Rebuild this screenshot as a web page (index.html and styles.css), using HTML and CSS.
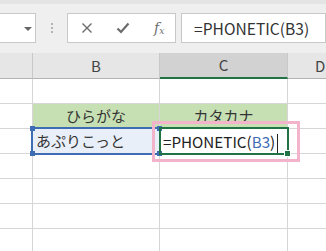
FILE: index.html
```html
<!DOCTYPE html>
<html lang="ja">
<head>
<meta charset="utf-8">
<link rel="stylesheet" href="styles.css">
</head>
<body>
<div class="app">
  <div class="toolbar">
    <div class="namebox">
      <span class="dropdown"></span>
    </div>
    <div class="grip"><span></span><span></span><span></span></div>
    <div class="fxbox">
      <svg class="icon" width="12" height="12" viewBox="0 0 12 12"><path d="M1.5 1.5 L10.5 10.5 M10.5 1.5 L1.5 10.5" stroke="#6b6b6b" stroke-width="1.4" fill="none"/></svg>
      <svg class="icon" width="14" height="12" viewBox="0 0 14 12"><path d="M1.5 6.5 L5 10 L12.5 1.5" stroke="#6b6b6b" stroke-width="2.2" fill="none"/></svg>
      <span class="fx">f<sub>x</sub></span>
    </div>
    <div class="formula">=PHONETIC(B3)</div>
  </div>
  <div class="sheet">
    <div class="hdr"></div>
    <div class="hdr">B</div>
    <div class="hdr hdr-active">C</div>
    <div class="hdr">D</div>

    <div class="cell"></div><div class="cell"></div><div class="cell"></div><div class="cell"></div>

    <div class="cell"></div>
    <div class="cell green">ひらがな</div>
    <div class="cell green">カタカナ</div>
    <div class="cell"></div>

    <div class="cell"></div>
    <div class="cell ref">あぷりこっと
      <span class="refbox"><i class="h tl"></i><i class="h bl"></i><i class="h tr"></i><i class="h br"></i></span>
    </div>
    <div class="cell edit">=PHONETIC(<span class="blue">B3</span>)<span class="caret"></span>
      <span class="activebox"><i class="fill"></i></span>
    </div>
    <div class="cell"></div>

    <div class="cell"></div><div class="cell"></div><div class="cell"></div><div class="cell"></div>
    <div class="cell"></div><div class="cell"></div><div class="cell"></div><div class="cell"></div>
    <div class="cell"></div><div class="cell"></div><div class="cell"></div><div class="cell"></div>
    <div class="cell"></div><div class="cell"></div><div class="cell"></div><div class="cell"></div>

    <div class="pink"></div>
  </div>
</div>
</body>
</html>
```
FILE: styles.css
```css
html, body {
  margin: 0;
  padding: 0;
  background: #ffffff;
}
.app {
  width: 326px;
  height: 251px;
  overflow: hidden;
  font-family: "Noto Sans CJK JP", "Noto Sans", sans-serif;
  color: #222;
}
.toolbar {
  height: 53px;
  box-sizing: border-box;
  background: #efefef;
  border-top: 4px solid #e4e4e4;
  padding-top: 9px;
  display: flex;
  align-items: flex-start;
}
.namebox {
  width: 37px;
  height: 30px;
  box-sizing: border-box;
  margin-left: -1px;
  background: #fff;
  border: 1px solid #c8c8c8;
  position: relative;
}
.dropdown {
  position: absolute;
  left: 24px;
  top: 13px;
  width: 0;
  height: 0;
  border-left: 4px solid transparent;
  border-right: 4px solid transparent;
  border-top: 4px solid #666;
}
.grip {
  width: 31px;
  height: 30px;
  display: flex;
  flex-direction: column;
  align-items: center;
  justify-content: center;
  gap: 2px;
}
.grip span {
  width: 2px;
  height: 2px;
  background: #b4b4b4;
}
.fxbox {
  width: 109px;
  height: 30px;
  box-sizing: border-box;
  background: #fff;
  border: 1px solid #c8c8c8;
  display: flex;
  align-items: center;
  padding-left: 13px;
  gap: 23px;
}
.fx {
  font-family: "DejaVu Serif", "Liberation Serif", serif;
  font-style: italic;
  font-size: 14px;
  color: #707070;
  margin-left: 1px;
}
.fx sub {
  font-size: 9px;
  vertical-align: -1px;
}
.formula {
  margin-left: 5px;
  flex: 1;
  height: 30px;
  box-sizing: border-box;
  background: #fff;
  border: 1px solid #c8c8c8;
  padding-left: 12px;
  font-size: 15.6px;
  line-height: 28px;
  color: #333;
  white-space: nowrap;
}
.sheet {
  position: relative;
  display: grid;
  grid-template-columns: 33px 127px 128px 1fr;
  grid-auto-rows: 25px;
  grid-template-rows: 26px;
}
.hdr {
  background: #e6e6e6;
  border-right: 1px solid #c8c8c8;
  border-bottom: 1px solid #b4b4b4;
  font-size: 15px;
  color: #444;
  text-align: center;
  line-height: 25px;
  overflow: hidden;
}
.hdr:nth-child(4) {
  border-right: none;
  text-align: left;
  padding-left: 27px;
}
.hdr-active {
  background: #d2d2d2;
  border-bottom: 2px solid #217346;
  line-height: 24px;
}
.cell {
  border-right: 1px solid #d6d6d6;
  border-bottom: 1px solid #d6d6d6;
  font-size: 15px;
  line-height: 24px;
  white-space: nowrap;
  position: relative;
}
.cell:nth-child(4n) { border-right: none; }
.green {
  background: #c6e0b4;
  text-align: center;
  color: #333;
}
.ref {
  background: #e9eff8;
  padding-left: 3px;
  color: #333;
}
.refbox {
  position: absolute;
  left: -2px;
  top: -2px;
  right: -2px;
  bottom: -2px;
  border: 2px solid #3f6db3;
  z-index: 2;
}
.h {
  position: absolute;
  width: 5px;
  height: 5px;
  background: #3f6db3;
}
.tl { left: -3px; top: -3px; }
.bl { left: -3px; bottom: -3px; }
.tr { right: -3px; top: -3px; }
.br { right: -3px; bottom: -3px; }
.edit {
  padding-left: 3px;
  color: #222;
  font-size: 15.2px;
}
.blue { color: #3f6db3; }
.caret {
  display: inline-block;
  width: 1px;
  height: 19px;
  background: #222;
  vertical-align: middle;
  margin-left: 2px;
}
.activebox {
  position: absolute;
  left: -1px;
  top: -2px;
  right: -2px;
  bottom: -2px;
  border: 2px solid #217346;
  z-index: 3;
}
.fill {
  position: absolute;
  right: -4px;
  bottom: -4px;
  width: 5px;
  height: 5px;
  background: #217346;
  border: 1px solid #fff;
}
.pink {
  position: absolute;
  left: 152px;
  top: 68px;
  width: 148px;
  height: 41px;
  box-sizing: border-box;
  border: 3px solid #f3b4cb;
  z-index: 4;
}
```
